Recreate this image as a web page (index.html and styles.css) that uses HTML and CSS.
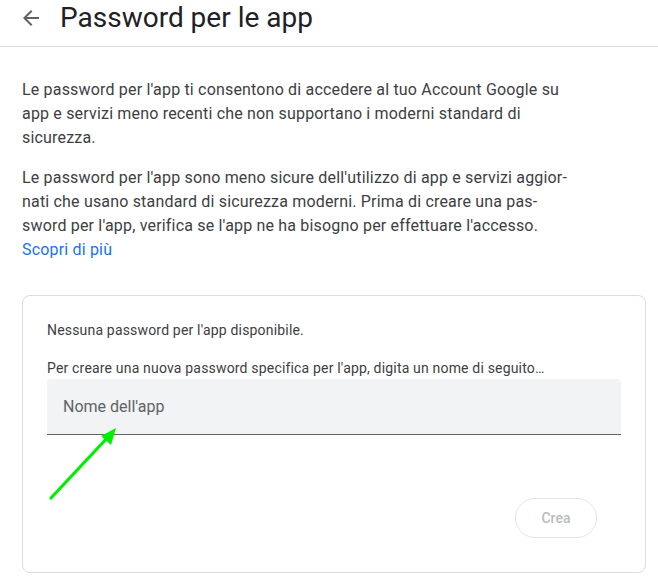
FILE: index.html
```html
<!DOCTYPE html>
<html lang="it">
<head>
<meta charset="utf-8">
<title>Password per le app</title>
<link rel="stylesheet" href="styles.css">
</head>
<body>
<header class="topbar">
  <span class="back" aria-label="Indietro">
    <svg viewBox="0 0 24 24" width="24" height="24"><path d="M20 11H7.83l5.59-5.59L12 4l-8 8 8 8 1.41-1.41L7.83 13H20v-2z" fill="#5f6368"/></svg>
  </span>
  <h1 class="title">Password per le app</h1>
</header>
<main class="content">
  <p class="para">Le password per l'app ti consentono di accedere al tuo Account Google su app e servizi meno recenti che non supportano i moderni standard di sicurezza.</p>
  <p class="para">Le password per l'app sono meno sicure dell'utilizzo di app e servizi aggior&shy;nati che usano standard di sicurezza moderni. Prima di creare una pas&shy;sword per l'app, verifica se l'app ne ha bisogno per effettuare l'accesso.<br><a class="link" href="#">Scopri di più</a></p>
  <section class="card">
    <p class="note">Nessuna password per l'app disponibile.</p>
    <p class="hint">Per creare una nuova password specifica per l'app, digita un nome di seguito…</p>
    <div class="field"><span class="placeholder">Nome dell'app</span></div>
    <div class="actions"><button class="btn" disabled>Crea</button></div>
    <svg class="pointer" viewBox="0 0 80 80" width="80" height="80">
      <line x1="4" y1="76" x2="62" y2="14" stroke="#00ee00" stroke-width="3.2" stroke-linecap="round"/>
      <polygon points="69,6 64,23 54,14" fill="#00ee00"/>
    </svg>
  </section>
</main>
</body>
</html>
```
FILE: styles.css
```css
* { box-sizing: border-box; }
body {
  margin: 0;
  font-family: Roboto, "Liberation Sans", Arial, sans-serif;
  color: #202124;
  background: #fff;
}
.topbar {
  display: flex;
  align-items: center;
  height: 47px;
  padding: 0 0 10px 19px;
  border-bottom: 1px solid #dadce0;
}
.back { display: flex; width: 24px; height: 24px; }
.title {
  margin: 0 0 0 17px;
  font-size: 28px;
  font-weight: 400;
  line-height: 36px;
  color: #202124;
}
.content {
  padding: 31px 12px 0 22px;
}
.para {
  margin: 0 0 16px;
  max-width: 550px;
  font-size: 16px;
  line-height: 24px;
  letter-spacing: 0.18px;
  color: #3c4043;
  hyphens: manual;
}
.link { color: #1a73e8; text-decoration: none; }
.card {
  position: relative;
  margin-top: 33px;
  border: 1px solid #dadce0;
  border-radius: 8px;
  padding: 24px 24px 34px;
}
.note, .hint {
  margin: 0;
  font-size: 14px;
  line-height: 20px;
  letter-spacing: 0.18px;
  color: #3c4043;
}
.hint { margin-top: 18px; }
.field {
  margin-top: 1px;
  height: 56px;
  background: #f1f3f4;
  border-radius: 4px 4px 0 0;
  border-bottom: 1px solid #5f6368;
  padding: 0 16px;
  display: flex;
  align-items: center;
}
.placeholder { font-size: 16px; color: #5f6368; }
.actions {
  display: flex;
  justify-content: flex-end;
  margin-top: 63px;
  padding-right: 24px;
}
.btn {
  width: 82px;
  height: 40px;
  border: 1px solid #e3e5e8;
  border-radius: 20px;
  background: #fff;
  font-family: Roboto, "Liberation Sans", Arial, sans-serif;
  font-size: 14px;
  font-weight: 500;
  color: #b9bcc0;
}
.pointer {
  position: absolute;
  left: 24px;
  top: 126px;
}
```
